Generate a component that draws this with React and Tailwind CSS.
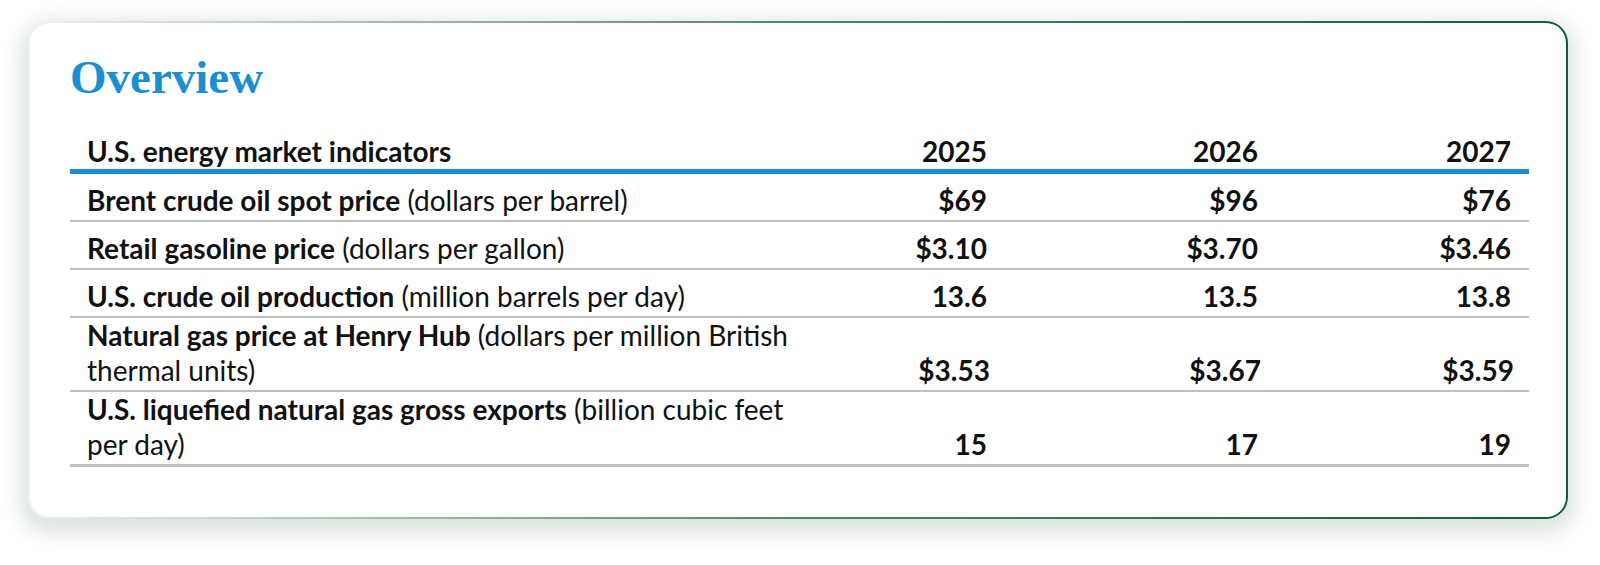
import React from "react";

const rows = [
  { name: "Brent crude oil spot price", unit: "(dollars per barrel)", values: ["$69", "$96", "$76"] },
  { name: "Retail gasoline price", unit: "(dollars per gallon)", values: ["$3.10", "$3.70", "$3.46"] },
  { name: "U.S. crude oil production", unit: "(million barrels per day)", values: ["13.6", "13.5", "13.8"] },
  {
    name: "Natural gas price at Henry Hub",
    unit: "(dollars per million British",
    unit2: "thermal units)",
    values: ["$3.53", "$3.67", "$3.59"],
  },
  {
    name: "U.S. liquefied natural gas gross exports",
    unit: "(billion cubic feet",
    unit2: "per day)",
    values: ["15", "17", "19"],
  },
];

const years = ["2025", "2026", "2027"];

const App = () => {
  return (
    <div className="bg-white w-[1600px] h-[565px] pt-[21px] pl-[28px]">
      {/* Card with fading green border */}
      <div className="w-[1540px] rounded-[22px] p-[2px] bg-linear-to-r from-[#edf2ef] via-[#4d8766] to-[#0b5d3a] shadow-[0_7px_20px_7px_rgba(70,120,90,0.2)]">
        <div className="bg-white rounded-[20px] pt-[31px] pb-[50px] pl-[40px] pr-[37px] text-[#111]" style={{ fontFamily: "Lato, sans-serif" }}>
          <h1
            className="text-[47px] leading-[47px] font-bold text-[#1b8fd2]"
            style={{ fontFamily: '"Liberation Serif", "Times New Roman", serif' }}
          >
            Overview
          </h1>

          {/* Header row */}
          <div className="mt-[33px] grid grid-cols-[1fr_220px_271px_253px] border-b-[5px] border-[#1b8fd2] text-[28px] leading-[35px] font-bold">
            <div className="pl-[17px]">U.S. energy market indicators</div>
            {years.map((y) => (
              <div key={y} className="text-right pr-[18px]">
                {y}
              </div>
            ))}
          </div>

          {/* Data rows */}
          {rows.map((row, i) => (
            <div
              key={i}
              className={
                "grid grid-cols-[1fr_220px_271px_253px] items-end pb-[2px] text-[28px] leading-[35px] border-[#bfbfbf] " +
                (i === rows.length - 1 ? "h-[75px] border-b-[3px]" : row.unit2 ? "h-[74px] border-b-2" : "h-[48px] border-b-2")
              }
            >
              <div className="pl-[17px] whitespace-nowrap">
                <span className="font-bold">{row.name}</span> {row.unit}
                {row.unit2 && (
                  <>
                    <br />
                    {row.unit2}
                  </>
                )}
              </div>
              {row.values.map((v, j) => (
                <div key={j} className="text-right pr-[18px] font-bold">
                  {v}
                </div>
              ))}
            </div>
          ))}
        </div>
      </div>
    </div>
  );
};

export default App;
